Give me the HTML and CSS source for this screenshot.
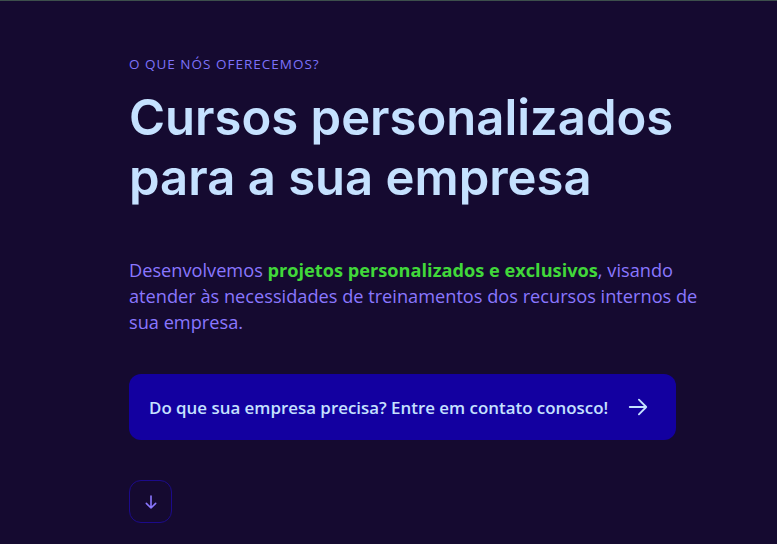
FILE: index.html
```
<!DOCTYPE html>
<html lang="pt">
<head>
<meta charset="utf-8">
<link rel="stylesheet" href="styles.css">
</head>
<body>
<main class="hero">
  <p class="eyebrow">O que nós oferecemos?</p>
  <h1 class="title">Cursos personalizados<br>para a sua empresa</h1>
  <p class="lead">Desenvolvemos <strong>projetos personalizados e exclusivos</strong>, visando atender às necessidades de treinamentos dos recursos internos de sua empresa.</p>
  <a class="cta" href="#">
    <span>Do que sua empresa precisa? Entre em contato conosco!</span>
    <svg width="22" height="22" viewBox="0 0 24 24" fill="none" stroke="currentColor" stroke-width="2" stroke-linecap="round" stroke-linejoin="round"><path d="M3 12h18M13 4l8 8-8 8"/></svg>
  </a>
  <a class="down" href="#">
    <svg width="16" height="16" viewBox="0 0 24 24" fill="none" stroke="currentColor" stroke-width="2.4" stroke-linecap="round" stroke-linejoin="round"><path d="M12 3v18M5 14l7 7 7-7"/></svg>
  </a>
</main>
</body>
</html>
```
FILE: styles.css
```
html, body {
  margin: 0;
  padding: 0;
}
body {
  background: #150a30;
  border-top: 1px solid #3d4f4c;
  height: 543px;
  overflow: hidden;
  font-family: Inter, "Noto Sans", sans-serif;
}
.hero {
  padding: 55px 0 0 129px;
  display: flex;
  flex-direction: column;
  align-items: flex-start;
}
.eyebrow {
  margin: 0;
  font-family: "Open Sans", sans-serif;
  font-size: 13.5px;
  letter-spacing: 1px;
  text-transform: uppercase;
  color: #7d72fa;
  line-height: 16px;
}
.title {
  margin: 16px 0 0;
  font-size: 49px;
  font-weight: 600;
  line-height: 60px;
  letter-spacing: 0;
  color: #c5e1ff;
}
.lead {
  margin: 49px 0 0;
  width: 600px;
  font-family: "Open Sans", sans-serif;
  font-size: 18.2px;
  line-height: 26px;
  color: #8a77ff;
}
.lead strong {
  color: #41d83a;
  font-weight: 700;
}
.cta {
  margin-top: 39px;
  box-sizing: border-box;
  width: 547px;
  height: 66px;
  padding: 0 27px 0 20px;
  display: flex;
  align-items: center;
  justify-content: space-between;
  background: #1300a0;
  border-radius: 12px;
  color: #c5e1ff;
  font-family: "Open Sans", sans-serif;
  font-size: 16.9px;
  font-weight: 600;
  text-decoration: none;
}
.down {
  margin-top: 40px;
  width: 43px;
  height: 43px;
  box-sizing: border-box;
  border: 1px solid #1c0a8a;
  border-radius: 12px;
  display: flex;
  align-items: center;
  justify-content: center;
  color: #8a77ff;
}
```
